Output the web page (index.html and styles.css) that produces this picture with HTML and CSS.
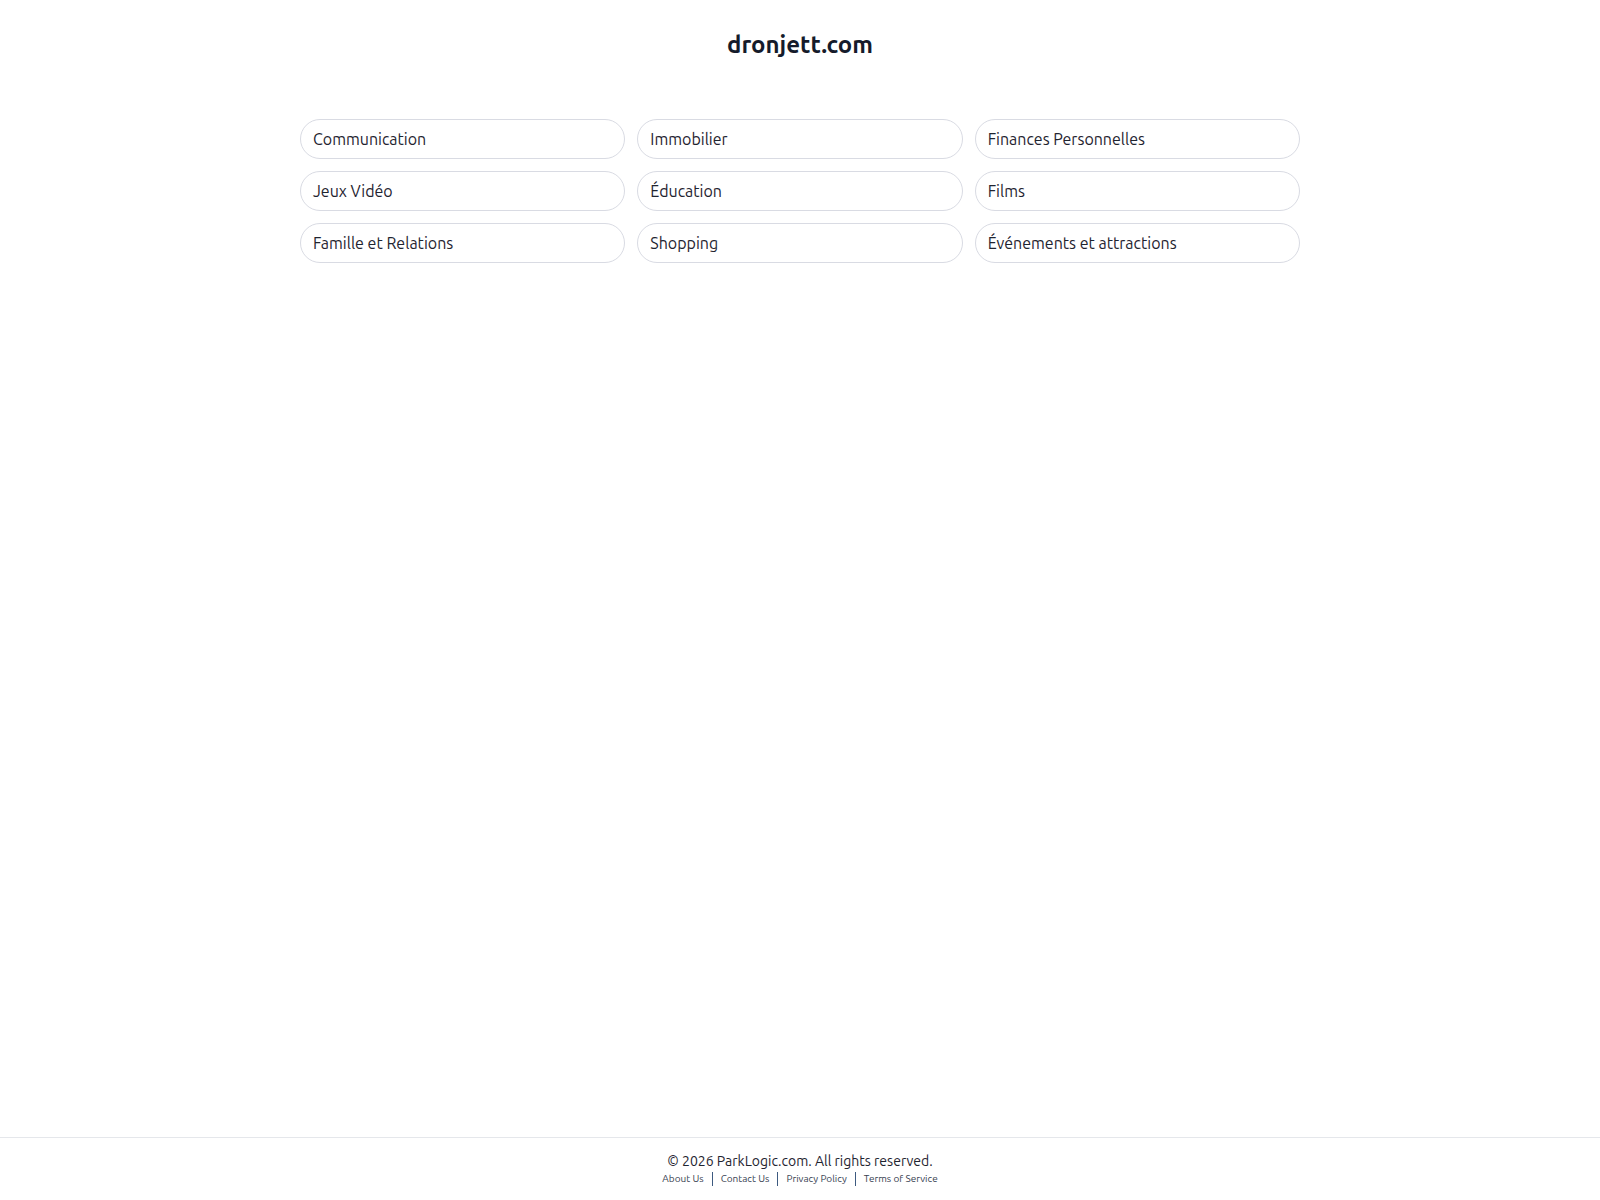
FILE: index.html
```html
<!DOCTYPE html>
<html lang="fr">
<head>
<meta charset="utf-8">
<title>dronjett.com</title>
<link rel="stylesheet" href="styles.css">
</head>
<body>
<div class="page">
  <header class="header">
    <h1 class="title">dronjett.com</h1>
  </header>
  <main class="main">
    <div class="grid">
      <a class="pill" href="#">Communication</a>
      <a class="pill" href="#">Immobilier</a>
      <a class="pill" href="#">Finances Personnelles</a>
      <a class="pill" href="#">Jeux Vidéo</a>
      <a class="pill" href="#">Éducation</a>
      <a class="pill" href="#">Films</a>
      <a class="pill" href="#">Famille et Relations</a>
      <a class="pill" href="#">Shopping</a>
      <a class="pill" href="#">Événements et attractions</a>
    </div>
  </main>
  <footer class="footer">
    <p class="copy">© 2026 ParkLogic.com. All rights reserved.</p>
    <nav class="links">
      <a href="#">About Us</a>
      <span class="sep"></span>
      <a href="#">Contact Us</a>
      <span class="sep"></span>
      <a href="#">Privacy Policy</a>
      <span class="sep"></span>
      <a href="#">Terms of Service</a>
    </nav>
  </footer>
</div>
</body>
</html>
```
FILE: styles.css
```css
* { box-sizing: border-box; }
html, body { margin: 0; padding: 0; background: #fff; }
body {
  font-family: "Ubuntu", "Noto Sans", "Open Sans", sans-serif;
  color: #1f2430;
}
.page {
  min-height: 100vh;
  display: flex;
  flex-direction: column;
}
.header {
  display: flex;
  justify-content: center;
  padding-top: 29px;
}
.title {
  margin: 0;
  font-size: 24px;
  line-height: 32px;
  font-weight: 700;
  color: #151b2b;
}
.main {
  flex: 1;
  display: flex;
  justify-content: center;
  padding-top: 58px;
}
.grid {
  width: 1000px;
  display: grid;
  grid-template-columns: repeat(3, 1fr);
  gap: 12px;
  align-content: start;
}
.pill {
  display: flex;
  align-items: center;
  height: 40px;
  padding: 0 12px;
  border: 1px solid #d9dbe3;
  border-radius: 20px;
  font-size: 16px;
  color: #1f2430;
  text-decoration: none;
}
.footer {
  border-top: 1px solid #e5e7eb;
  display: flex;
  flex-direction: column;
  align-items: center;
  padding: 14px 0 14px;
}
.copy {
  margin: 0 0 1px;
  font-size: 14px;
  line-height: 18px;
  color: #1f2430;
}
.links {
  display: flex;
  align-items: center;
  gap: 8px;
  font-size: 10px;
  line-height: 14px;
}
.links a {
  color: #374151;
  text-decoration: none;
}
.sep {
  width: 1px;
  height: 14px;
  margin-top: 1px;
  background: #3d5a80;
}
```
